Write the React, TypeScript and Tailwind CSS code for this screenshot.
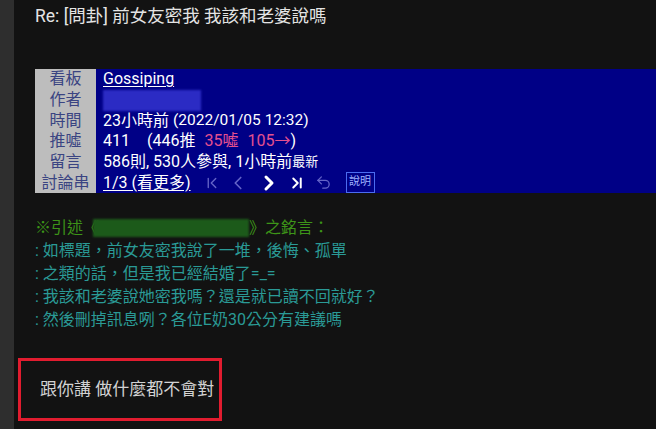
import { ChevronFirst, ChevronLeft, ChevronRight, ChevronLast, Undo2 } from 'lucide-react'

const font = { fontFamily: "Roboto, 'Noto Sans CJK TC', sans-serif" }

const labels = ['看板', '作者', '時間', '推噓', '留言', '討論串']

export default function App() {
  return (
    <div
      className="w-[656px] h-[429px] bg-[#121212] flex overflow-hidden"
      style={font}
    >
      {/* left gutter */}
      <div className="w-[14px] shrink-0 bg-[#2e2e2e]" />

      <div className="flex-1 flex flex-col">
        {/* title */}
        <h1 className="pl-[21px] pt-[4px] text-[17.5px] leading-[24px] text-[#e4e4e4]">
          Re: [問卦] 前女友密我 我該和老婆說嗎
        </h1>

        {/* article info panel */}
        <div className="ml-[21px] mt-[41px] h-[124px] flex">
          <div className="w-[61px] bg-[#bdbdbd] grid grid-rows-6 text-[16px] text-[#3a4482] text-center">
            {labels.map(l => (
              <div key={l} className="flex items-center justify-center leading-none">
                {l}
              </div>
            ))}
          </div>
          <div className="flex-1 bg-[#000086] grid grid-rows-6 pl-[7px] text-[16px] text-white">
            <div className="flex items-center">
              <span className="underline underline-offset-2">Gossiping</span>
            </div>
            <div className="flex items-center">
              <div className="w-[98px] h-[21px] bg-[#2b2bc4] blur-[1px]" />
            </div>
            <div className="flex items-center">
              23小時前 <span className="ml-1 text-[15.5px]">(2022/01/05 12:32)</span>
            </div>
            <div className="flex items-center whitespace-pre">
              <span>411</span>
              <span className="ml-[17px]">(446推</span>
              <span className="ml-[9px] text-[#e5508f]">35噓</span>
              <span className="ml-[9px] text-[#e5508f]">105→</span>
              <span>)</span>
            </div>
            <div className="flex items-center">
              586則, 530人參與, 1小時前<span className="text-[13px]">最新</span>
            </div>
            <div className="flex items-center">
              <span className="underline underline-offset-2">1/3 (看更多)</span>
              <div className="ml-[12px] flex items-center">
                <ChevronFirst size={18} strokeWidth={1.8} className="text-[#6464c8]" />
                <ChevronLeft size={22} strokeWidth={1.8} className="ml-[6px] text-[#6464c8]" />
                <ChevronRight size={24} strokeWidth={3} className="ml-[8px] text-white" />
                <ChevronLast size={18} strokeWidth={2.6} className="ml-[7px] text-white" />
                <Undo2 size={17} strokeWidth={1.8} className="ml-[9px] text-[#6464c8]" />
                <span className="ml-[14px] border border-[#4b6cf0] w-[29px] h-[21px] flex items-center justify-center text-[11px] text-[#9fb0ff]">
                  說明
                </span>
              </div>
            </div>
          </div>
        </div>

        {/* quoted text */}
        <div className="pl-[21px] mt-[23px] text-[16px] leading-[23px]">
          <div className="flex items-center text-[#3d9418]">
            <span>※引述《</span>
            <div className="-ml-[6px] w-[156px] h-[18px] bg-[#1c5a1a] blur-[1px]" />
            <span>》之銘言：</span>
          </div>
          <div className="text-[#2a9a96]">
            <p>: 如標題，前女友密我說了一堆，後悔、孤單</p>
            <p>: 之類的話，但是我已經結婚了=_=</p>
            <p>: 我該和老婆說她密我嗎？還是就已讀不回就好？</p>
            <p>: 然後刪掉訊息咧？各位E奶30公分有建議嗎</p>
          </div>
        </div>

        {/* highlighted reply */}
        <div className="ml-[4px] mt-[27px] w-[204px] h-[63px] border-[3px] border-[#e11c2f] flex items-center pl-[19px]">
          <span className="text-[17px] text-[#d2d2d2]">跟你講 做什麼都不會對</span>
        </div>
      </div>
    </div>
  )
}
